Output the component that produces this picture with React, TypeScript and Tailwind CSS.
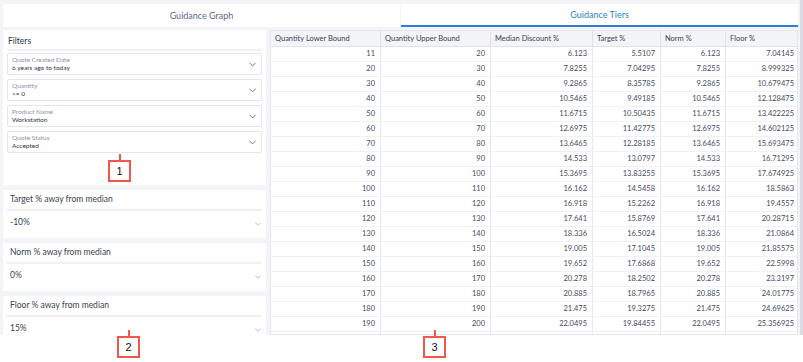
import React from "react";

const rows: (string | number)[][] = [
  [11, 20, "6.123", "5.5107", "6.123", "7.04145"],
  [20, 30, "7.8255", "7.04295", "7.8255", "8.999325"],
  [30, 40, "9.2865", "8.35785", "9.2865", "10.679475"],
  [40, 50, "10.5465", "9.49185", "10.5465", "12.128475"],
  [50, 60, "11.6715", "10.50435", "11.6715", "13.422225"],
  [60, 70, "12.6975", "11.42775", "12.6975", "14.602125"],
  [70, 80, "13.6465", "12.28185", "13.6465", "15.693475"],
  [80, 90, "14.533", "13.0797", "14.533", "16.71295"],
  [90, 100, "15.3695", "13.83255", "15.3695", "17.674925"],
  [100, 110, "16.162", "14.5458", "16.162", "18.5863"],
  [110, 120, "16.918", "15.2262", "16.918", "19.4557"],
  [120, 130, "17.641", "15.8769", "17.641", "20.28715"],
  [130, 140, "18.336", "16.5024", "18.336", "21.0864"],
  [140, 150, "19.005", "17.1045", "19.005", "21.85575"],
  [150, 160, "19.652", "17.6868", "19.652", "22.5998"],
  [160, 170, "20.278", "18.2502", "20.278", "23.3197"],
  [170, 180, "20.885", "18.7965", "20.885", "24.01775"],
  [180, 190, "21.475", "19.3275", "21.475", "24.69625"],
  [190, 200, "22.0495", "19.84455", "22.0495", "25.356925"],
  [200, 210, "22.6065", "20.34585", "22.6065", "25.997475"],
];

const headers = [
  "Quantity Lower Bound",
  "Quantity Upper Bound",
  "Median Discount %",
  "Target %",
  "Norm %",
  "Floor %",
];
const widths = ["w-[110px]", "w-[110px]", "w-[102px]", "w-[68px]", "w-[65px]", "w-[73px]"];

const Chevron = ({ cls }: { cls: string }) => (
  <svg viewBox="0 0 10 6" className={cls} fill="none" stroke="currentColor" strokeWidth="1.4" strokeLinecap="round" strokeLinejoin="round">
    <path d="M1 1l4 4 4-4" />
  </svg>
);

const filters = [
  ["Quote Created Date", "6 years ago to today"],
  ["Quantity", ">= 0"],
  ["Product Name", "Workstation"],
  ["Quote Status", "Accepted"],
];

const settings = [
  ["Target % away from median", "-10%"],
  ["Norm % away from median", "0%"],
  ["Floor % away from median", "15%"],
];

function Callout({ n, cls }: { n: string; cls: string }) {
  return (
    <div className={`absolute flex flex-col items-center ${cls}`}>
      <div className="w-[2px] h-[6px] bg-[#f2564d]" />
      <div className="w-[23px] h-[22px] border-2 border-[#f2564d] bg-white flex items-center justify-center text-[11px] text-[#111] font-['Liberation_Sans',sans-serif]">
        {n}
      </div>
    </div>
  );
}

export default function App() {
  return (
    <div className="relative w-[803px] h-[362px] bg-white overflow-hidden font-['Lato',sans-serif] text-[#3e4456]">
      <div className="h-[335px] bg-[#f3f4f7] pt-[4px] pl-[3px] pr-[5px] overflow-hidden flex flex-col relative">
        {/* tabs */}
        <div className="flex h-[23px] shrink-0">
          <div className="w-[397px] bg-white flex items-center justify-center text-[9px] text-[#5a6a85]">
            Guidance Graph
          </div>
          <div className="flex-1 ml-[1px] bg-white flex items-center justify-center text-[9px] text-[#2c7fd2] border-b-2 border-[#2c7fd2]">
            Guidance Tiers
          </div>
        </div>
        <div className="flex gap-[4px] mt-[3px] flex-1 min-h-0">
          {/* left column */}
          <div className="w-[263px] shrink-0 flex flex-col gap-[5px]">
            <div className="bg-white h-[155px] shrink-0 px-[4px] pt-[5px]">
              <div className="text-[8.5px] text-[#2f3442] leading-[12px] pl-[1px]">Filters</div>
              <div className="h-[2px] bg-[#eef0f4] mt-[2px] mb-[2px]" />
              <div className="flex flex-col gap-[4px]">
                {filters.map(([l, v]) => (
                  <div key={l} className="h-[22px] border border-[#e3e6ec] rounded-[2px] flex items-center px-[4px]">
                    <div className="flex-1 flex flex-col leading-[8px]">
                      <span className="text-[6.5px] text-[#8a93a6]">{l}</span>
                      <span className="text-[6.5px] text-[#2f3442]">{v}</span>
                    </div>
                    <Chevron cls="w-[7px] h-[5px] text-[#6b7488] mr-[1px]" />
                  </div>
                ))}
              </div>
            </div>
            {settings.map(([t, v]) => (
              <div key={t} className="bg-white h-[48px] shrink-0 px-[4px] pt-[3px]">
                <div className="text-[8.5px] leading-[12px] text-[#3a3f4d] pl-[3px]">{t}</div>
                <div className="h-[2px] bg-[#eef0f4] mt-[4px]" />
                <div className="flex items-center justify-between h-[20px] pl-[3px] pr-[1px] pt-[2px]">
                  <span className="text-[8.5px] text-[#3a3f4d]">{v}</span>
                  <Chevron cls="w-[6px] h-[4px] text-[#a7afbf] mt-[4px]" />
                </div>
              </div>
            ))}
          </div>
          {/* table */}
          <div className="w-[528px] shrink-0 bg-white border border-[#e6e8ee] overflow-hidden">
            <div className="flex h-[16px] bg-[#f3f4f7] border-b border-[#dfe2e8]">
              {headers.map((h, i) => (
                <div key={h} className={`${widths[i]} shrink-0 flex items-center px-[4px] text-[7.5px] text-[#3a3f4d] ${i < 5 ? "border-r border-[#dfe2e8]" : ""}`}>
                  {h}
                </div>
              ))}
            </div>
            {rows.map((r, ri) => (
              <div key={ri} className="flex h-[15px] border-b-[1.5px] border-[#eff1f5]">
                {r.map((c, i) => (
                  <div key={i} className={`${widths[i]} shrink-0 flex items-center justify-end px-[5px] text-[7.5px] text-[#444a5c] ${i < 5 ? "border-r border-[#e6e8ee]" : ""}`}>
                    {c}
                  </div>
                ))}
              </div>
            ))}
          </div>
        </div>
        <div className="absolute right-0 top-0 w-[3px] h-full bg-[#d9dce2]" />
      </div>
      <Callout n="1" cls="left-[108px] top-[154px]" />
      <Callout n="2" cls="left-[117px] top-[330px]" />
      <Callout n="3" cls="left-[423px] top-[330px]" />
    </div>
  );
}
